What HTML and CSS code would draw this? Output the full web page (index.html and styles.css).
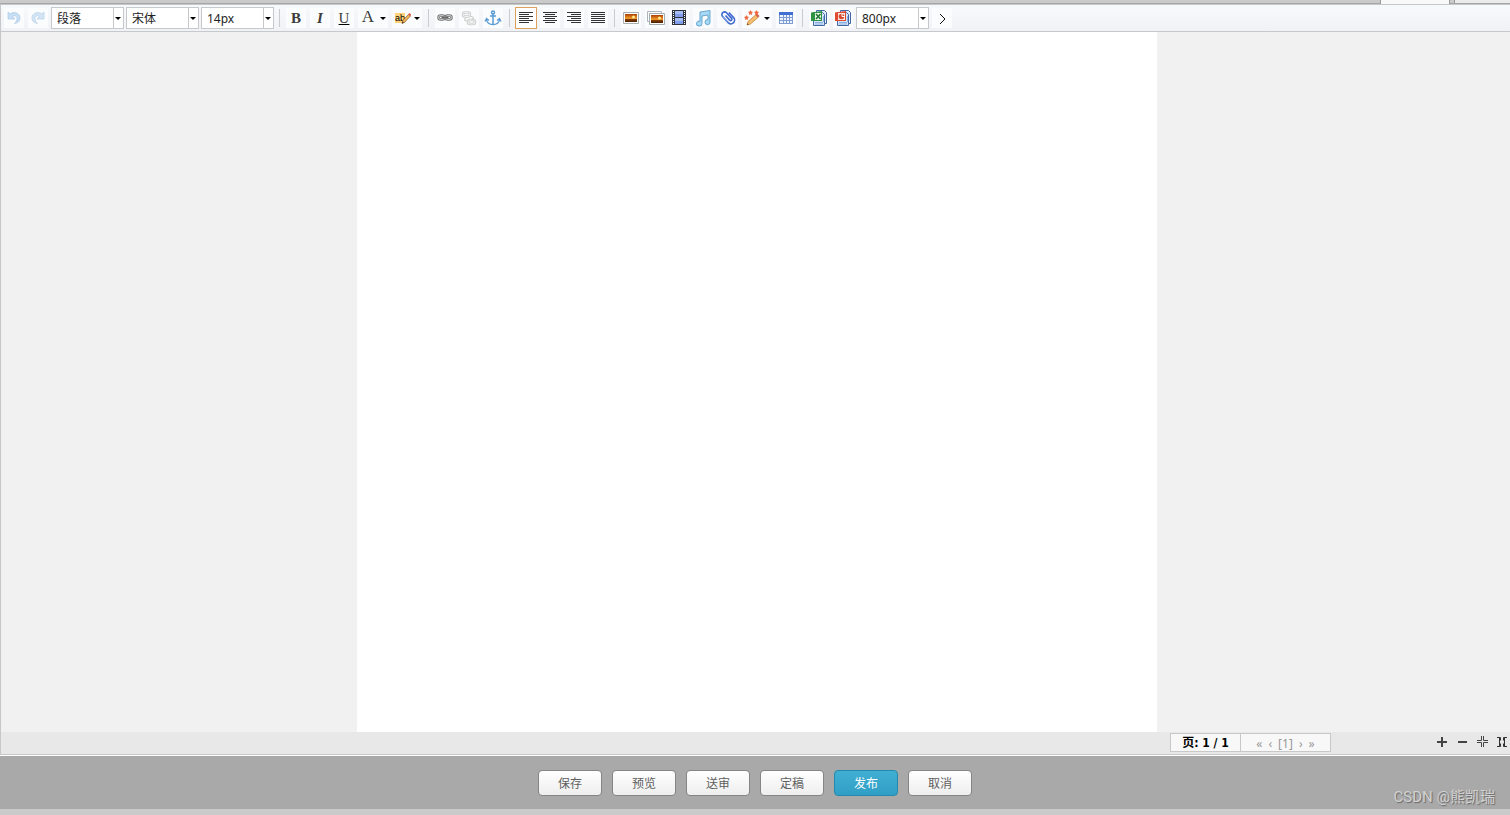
FILE: index.html
```html
<!DOCTYPE html>
<html lang="zh-CN">
<head>
<meta charset="utf-8">
<title>内容编辑</title>
<link rel="stylesheet" href="styles.css">
</head>
<body>
<div class="tabs"><span class="tab tab-active"></span><span class="tab tab-next"></span></div>
<main class="editor">
  <div class="toolbar" role="toolbar" aria-label="编辑工具">
    <button class="tool" aria-label="撤销"><svg viewBox="0 0 20 20"><path d="M4 4v7h7L8.500 8.500c2-1.500 4.500-.5 4.500 2 0 2-1 3.500-2.500 5 3.500-.5 5.500-2.500 5.500-5.500C16 5 10 3 6 6z" fill="#c7def3" stroke="#a9cae7" stroke-width=".7"/></svg></button>
    <button class="tool" aria-label="重做"><svg viewBox="0 0 20 20"><path d="M16 4v7H9l2.500-2.500c-2-1.500-4.500-.5-4.500 2 0 2 1 3.500 2.500 5C6 15 4 13 4 10c0-5 6-7 10-4z" fill="#d3e5f5" stroke="#b3d0e8" stroke-width=".7"/></svg></button>
    <span class="combo"><select aria-label="段落格式"><option>段落</option></select></span>
    <span class="combo"><select aria-label="字体"><option>宋体</option></select></span>
    <span class="combo"><select aria-label="字号"><option>14px</option></select></span>
    <span class="sep"></span>
    <button class="tool letter bold" aria-label="加粗">B</button>
    <button class="tool letter italic" aria-label="斜体">I</button>
    <button class="tool letter under" aria-label="下划线">U</button>
    <button class="tool letter split" aria-label="字体颜色"><span class="face">A</span><span class="more"></span></button>
    <button class="tool split" aria-label="背景色"><svg viewBox="0 0 20 20"><path d="M3 5h10v10H3z" fill="#ffd27a"/><text x="3" y="13" class="ab">ab</text><path d="M10 15.500l.8-3 5.500-6 2 1.700-5.500 6z" fill="#f0b35a" stroke="#76522f" stroke-width=".6"/><path d="M10 15.500l.6-2 1.300 1.200z" fill="#3a2a1c"/><path d="M16.300 6.500l1-1.500 1.900 1.500-.9 1.700z" fill="#e5563b"/></svg><span class="more"></span></button>
    <span class="sep"></span>
    <button class="tool" aria-label="超链接"><svg viewBox="0 0 20 20" fill="none"><g stroke="#777" stroke-width="2.500"><rect x="3.500" y="7.500" width="6" height="4" rx="2"/><rect x="10.500" y="7.500" width="6" height="4" rx="2"/></g><g stroke="#ddd" stroke-width=".8"><rect x="3.500" y="7.500" width="6" height="4" rx="2"/><rect x="10.500" y="7.500" width="6" height="4" rx="2"/></g><path d="M6.500 9.500h7" stroke="#666" stroke-width="2"/></svg></button>
    <button class="tool" aria-label="取消链接"><svg viewBox="0 0 20 20" fill="none"><g stroke="#ccc" stroke-width="2.500"><rect x="4" y="4.500" width="7" height="4" rx="2"/><rect x="9" y="12" width="7" height="4" rx="2"/></g><g stroke="#fafafa" stroke-width=".8"><rect x="4" y="4.500" width="7" height="4" rx="2"/><rect x="9" y="12" width="7" height="4" rx="2"/></g><path d="M12 8.500c3 0 3 2 1 3M8 13c-3 0-3-2-1-3" stroke="#ccc" stroke-width="1.200"/></svg></button>
    <button class="tool" aria-label="锚点"><svg viewBox="0 0 20 20" fill="none" stroke="#5b9bd5" stroke-width="1.500"><circle cx="10" cy="4.500" r="1.500"/><path d="M10 6v11M7 8h6"/><path d="M3.500 11.500c.5 3.500 3 5 6.500 5s6-1.500 6.500-5M2 13.500l1.500-3 2.500 2M18 13.500l-1.500-3-2.500 2" stroke-width="1.300"/></svg></button>
    <span class="sep"></span>
    <button class="tool active" aria-label="左对齐"><svg viewBox="0 0 20 20" class="lines"><path d="M3 4.500h14M3 6.500h10M3 8.500h14M3 10.500h10M3 12.500h14M3 14.500h10"/></svg></button>
    <button class="tool" aria-label="居中对齐"><svg viewBox="0 0 20 20" class="lines"><path d="M3 4.500h14M5 6.500h10M3 8.500h14M5 10.500h10M3 12.500h14M5 14.500h10"/></svg></button>
    <button class="tool" aria-label="右对齐"><svg viewBox="0 0 20 20" class="lines"><path d="M3 4.500h14M7 6.500h10M3 8.500h14M7 10.500h10M3 12.500h14M7 14.500h10"/></svg></button>
    <button class="tool" aria-label="两端对齐"><svg viewBox="0 0 20 20" class="lines"><path d="M3 4.500h14M3 6.500h14M3 8.500h14M3 10.500h14M3 12.500h14M3 14.500h14"/></svg></button>
    <span class="sep"></span>
    <button class="tool" aria-label="图片"><svg viewBox="0 0 20 20"><defs><linearGradient id="sky" x1="0" y1="0" x2="0" y2="1"><stop offset="0" stop-color="#a83c04"/><stop offset=".55" stop-color="#f5a02a"/><stop offset=".65" stop-color="#8a3d05"/><stop offset="1" stop-color="#4a1f00"/></linearGradient></defs><path d="M2.500 4.500h15v11h-15z" fill="#fff" stroke="#a9aeb3"/><path d="M4 6h12v8H4z" fill="url(#sky)"/><circle cx="12.500" cy="9" r="1.500" fill="#ffe98a"/></svg></button>
    <button class="tool" aria-label="多图"><svg viewBox="0 0 20 20"><path d="M2.500 3.500h14v10h-14z" fill="#fff" stroke="#adb4ba"/><path d="M4.500 5.500h15v11h-15z" fill="#fff" stroke="#a3abb1"/><path d="M6 7h12v8H6z" fill="url(#sky)"/><circle cx="14.500" cy="10" r="1.500" fill="#ffe98a"/></svg></button>
    <button class="tool" aria-label="视频"><svg viewBox="0 0 20 20"><path d="M3 2h14v15H3z" fill="#30343c"/><path d="M6 3h8v6H6zM6 10h8v6H6z" fill="#7f9dea"/><path d="M6 3h8v3H6zM6 10h8v3H6z" fill="#a7bdf6"/><path d="M4.500 3v14M15.500 3v14" stroke="#fff" stroke-dasharray="1 1"/></svg></button>
    <button class="tool" aria-label="音频"><svg viewBox="0 0 20 20"><path d="M7 4l10-1.500V14a2.500 2.500 0 1 1-2-2.300V7L9 8v7.500a2.800 2.500 0 1 1-2-2.300z" fill="#a7d9f5" stroke="#5ba0cc" stroke-width=".9"/></svg></button>
    <button class="tool clip" aria-label="附件"><svg viewBox="0 0 20 20" fill="none"><g transform="rotate(-42 10 10)"><path id="wire" d="M9.800 6.500v6.200a1.300 1.300 0 0 0 2.600 0V5.200a2.700 2.700 0 0 0-5.400 0v8.300a3.700 3.700 0 0 0 7.400 0V6.500" stroke="#3e69cf" stroke-width="1.600"/><use href="#wire" opacity="0"/><path d="M7 5.500v8" stroke="#a9c2fa" stroke-width=".6"/></g></svg></button>
    <button class="tool split" aria-label="一键排版"><svg viewBox="0 0 20 20"><path d="M5 17l1-3.500 7.500-6.500 2.500 2.500L8.500 16z" fill="#f6bd6c" stroke="#c07c35" stroke-width=".7"/><path d="M5 17l.6-1.800 1.400 1.300z" fill="#694322"/><path d="M13.500 7l1.500-1.500 2.500 2.500L16 9.500z" fill="#cf5b45"/><g fill="#ee6840"><path id="star" d="M8.500 2l.8 1.600 1.700.3-1.200 1.300.3 1.800-1.600-.8-1.600.8.3-1.800L6 3.900l1.700-.3z"/><use href="#star" x="-4" y="5"/><use href="#star" x="6"/></g></svg><span class="more"></span></button>
    <button class="tool" aria-label="表格"><svg viewBox="0 0 20 20"><path d="M3 4h14v12H3z" fill="#7e9ccf"/><path d="M3 4h14v3H3z" fill="#3f6fd0"/><path d="M4 7h3v2H4zm4 0h2v2H8zm3 0h2v2h-2zm3 0h2v2h-2zM4 10h3v2H4zm4 0h2v2H8zm3 0h2v2h-2zm3 0h2v2h-2zM4 13h3v2H4zm4 0h2v2H8zm3 0h2v2h-2zm3 0h2v2h-2z" fill="#edf4ff"/></svg></button>
    <span class="sep"></span>
    <button class="tool" aria-label="导入 Excel"><svg viewBox="0 0 20 20"><path d="M7.500 2.500h8l2 2v11h-10z" fill="#dceaff" stroke="#4269a5"/><path d="M4.500 4.500h9l2 2v11h-11z" fill="#d5e6fc" stroke="#4269a5"/><path d="M6 14.500h8M6 16h8M14.500 8v6" stroke="#8fb0dd"/><path d="M2 4.500L13 3v10H2z" fill="#2f9344"/><path d="M6 5h6v7H6z" fill="#e9f6e8"/><path d="M7 6l4.500 5M11.500 6L7 11" stroke="#217933" stroke-width="1.600"/></svg></button>
    <button class="tool" aria-label="导入 PPT"><svg viewBox="0 0 20 20"><path d="M7.500 2.500h8l2 2v11h-10z" fill="#dceaff" stroke="#4269a5"/><path d="M4.500 4.500h9l2 2v11h-11z" fill="#d5e6fc" stroke="#4269a5"/><path d="M6 14.500h8M6 16h8M14.500 8v6" stroke="#8fb0dd"/><path d="M2 4.500L13 3v10H2z" fill="#e2492f"/><path d="M5 5h7v7H5z" fill="#fbe9e1"/><circle cx="8.500" cy="8.500" r="2.800" fill="#d84a2b"/><path d="M9 5v3.500h3" stroke="#fff" fill="none"/></svg></button>
    <span class="combo"><select aria-label="页面宽度"><option>800px</option></select></span>
    <button class="tool" aria-label="更多"><svg viewBox="0 0 20 20"><path d="M8 6l5 5-5 5" fill="none" stroke="#111"/></svg></button>
  </div>
  <div class="canvas"><div class="page" contenteditable="true" role="textbox" aria-label="正文"></div></div>
  <div class="status">
    <div class="pager"><strong class="count">页: 1 / 1</strong><nav class="pages"><a href="#">«</a><a href="#">‹</a><a href="#">[1]</a><a href="#">›</a><a href="#">»</a></nav></div>
    <div class="views">
      <button aria-label="增高"><svg viewBox="0 0 12 12"><path d="M6 1v10M1 6h10" stroke="#444" stroke-width="2"/></svg></button>
      <button aria-label="减高"><svg viewBox="0 0 12 12"><path d="M2 6h9" stroke="#444" stroke-width="2"/></svg></button>
      <button aria-label="收缩"><svg viewBox="0 0 12 12" fill="none" stroke="#444"><path d="M1 4.500h4.500V0M12 4.500H7.500V0M1 6.500h4.500V11M12 6.500H7.500V11"/></svg></button>
      <button aria-label="展开"><svg viewBox="0 0 12 12" fill="none" stroke="#333"><path d="M1 1.500h3.500v3M1 10.500h3.500v-3M11 1.500H7.500v3M11 10.500H7.500v-3M3.500 2v8M8.500 2v8"/></svg></button>
    </div>
  </div>
</main>
<footer class="actions">
  <button class="action">保存</button>
  <button class="action">预览</button>
  <button class="action">送审</button>
  <button class="action">定稿</button>
  <button class="action primary">发布</button>
  <button class="action">取消</button>
  <span class="mark">CSDN @熊凯瑞</span>
</footer>
</body>
</html>
```
FILE: styles.css
```css
* { box-sizing: border-box; }
body {
  margin: 0;
  height: 100vh;
  display: flex;
  flex-direction: column;
  padding-bottom: 6px;
  background: #cacaca;
  color: #222;
  font: 12px/16px "Noto Sans", "Noto Sans CJK SC", sans-serif;
  overflow: hidden;
}
button, select { font: inherit; }
.tabs {
  height: 4px;
  flex: none;
  display: flex;
  justify-content: flex-end;
  gap: 4px;
  border-bottom: 1px solid #a6a6a6;
}
.tab { height: 4px; border-left: 1px solid #999; }
.tab-active { width: 70px; background: #f9f9f9; border-right: 1px solid #999; }
.tab-next { width: 56px; height: 3px; background: #ebebeb; }
.editor {
  flex: 1;
  min-height: 0;
  display: flex;
  flex-direction: column;
  border: 1px solid #c6c7c9;
  border-right: 0;
  background: #f1f1f1;
}
.toolbar {
  flex: none;
  display: flex;
  align-items: center;
  gap: 2px;
  padding: 2px;
  border-bottom: 1px solid #c6c8cc;
  background: linear-gradient(#f8f9fb, #f0f2f5);
}
.tool {
  width: 22px;
  height: 22px;
  flex: none;
  padding: 0;
  display: flex;
  border: 1px solid transparent;
  background: #fbfcfd;
  background-clip: padding-box;
}
.tool svg { width: 20px; height: 20px; flex: none; }
.tool.active { border-color: #dca25d; background: #fff; }
.split { width: 32px; }
.clip { width: 23px; padding-left: 1px; }
.more { flex: 1; display: flex; align-items: center; justify-content: center; height: 20px; }
.more::before, .combo::after {
  content: "";
  border: 3px solid transparent;
  border-top-color: #000;
  border-bottom: 0;
}
.letter {
  justify-content: center;
  color: #3c3c3c;
  font: 15px/20px "Liberation Serif", serif;
}
.face { width: 20px; font-size: 17px; line-height: 18px; }
.bold { font-weight: bold; }
.italic { font-style: italic; font-weight: bold; }
.under { text-decoration: underline; text-decoration-color: #000; }
.ab { font: 9px "Liberation Sans", sans-serif; }
.lines { stroke: #333; fill: none; }
.combo {
  position: relative;
  width: 73px;
  height: 22px;
  flex: none;
  border: 1px solid #c6c8cc;
  background: #fff;
}
.combo select {
  width: 100%;
  height: 20px;
  appearance: none;
  border: 0;
  padding: 2px 10px 0 5px;
  background: linear-gradient(#c6c8cc, #c6c8cc) 61px 0 / 1px 100% no-repeat;
  color: #222;
}
.combo::after { position: absolute; right: 2px; top: 9px; pointer-events: none; }
.sep { width: 1px; height: 18px; margin: 0 3px; background: #c9cbcd; }
.canvas { flex: 1; min-height: 0; display: flex; justify-content: center; padding-left: 3px; }
.page { width: 800px; background: #fff; outline: 0; }
.status {
  flex: none;
  display: flex;
  justify-content: flex-end;
  padding: 1px 2px 2px 0;
  gap: 105px;
  background: #e8e8e8;
}
.pager { display: flex; height: 19px; border: 1px solid #c8c8c8; background: #f8f8f8; }
.count {
  width: 70px;
  border-right: 1px solid #c8c8c8;
  color: #000;
  font: bold 12px/19px "DejaVu Sans Condensed", "DejaVu Sans", "Noto Sans CJK SC", sans-serif;
  text-align: center;
}
.pages { width: 89px; display: flex; justify-content: center; gap: 6px; line-height: 19px; }
.pages a { color: #999; text-decoration: none; }
.views { display: flex; gap: 8px; padding-top: 3px; }
.views button { width: 12px; height: 12px; padding: 0; display: flex; border: 0; background: none; }
.actions {
  position: relative;
  flex: none;
  display: flex;
  justify-content: center;
  gap: 10px;
  padding: 14px 0 13px;
  border-top: 1px solid #fff;
  background: #a9a9a9;
}
.action {
  width: 64px;
  height: 26px;
  padding: 2px 0 0;
  border: 1px solid #858585;
  border-radius: 4px;
  background: linear-gradient(#fff, #eee);
  color: #606060;
}
.primary { border-color: #2389ae; background: linear-gradient(#40afd3, #319fc5); color: #fff; }
.mark {
  position: absolute;
  right: 15px;
  bottom: 2px;
  color: #d2d2d2;
  font: 15px/20px Roboto, "Noto Sans CJK SC", sans-serif;
  text-shadow: 1px 1px 1px #666;
}
```
